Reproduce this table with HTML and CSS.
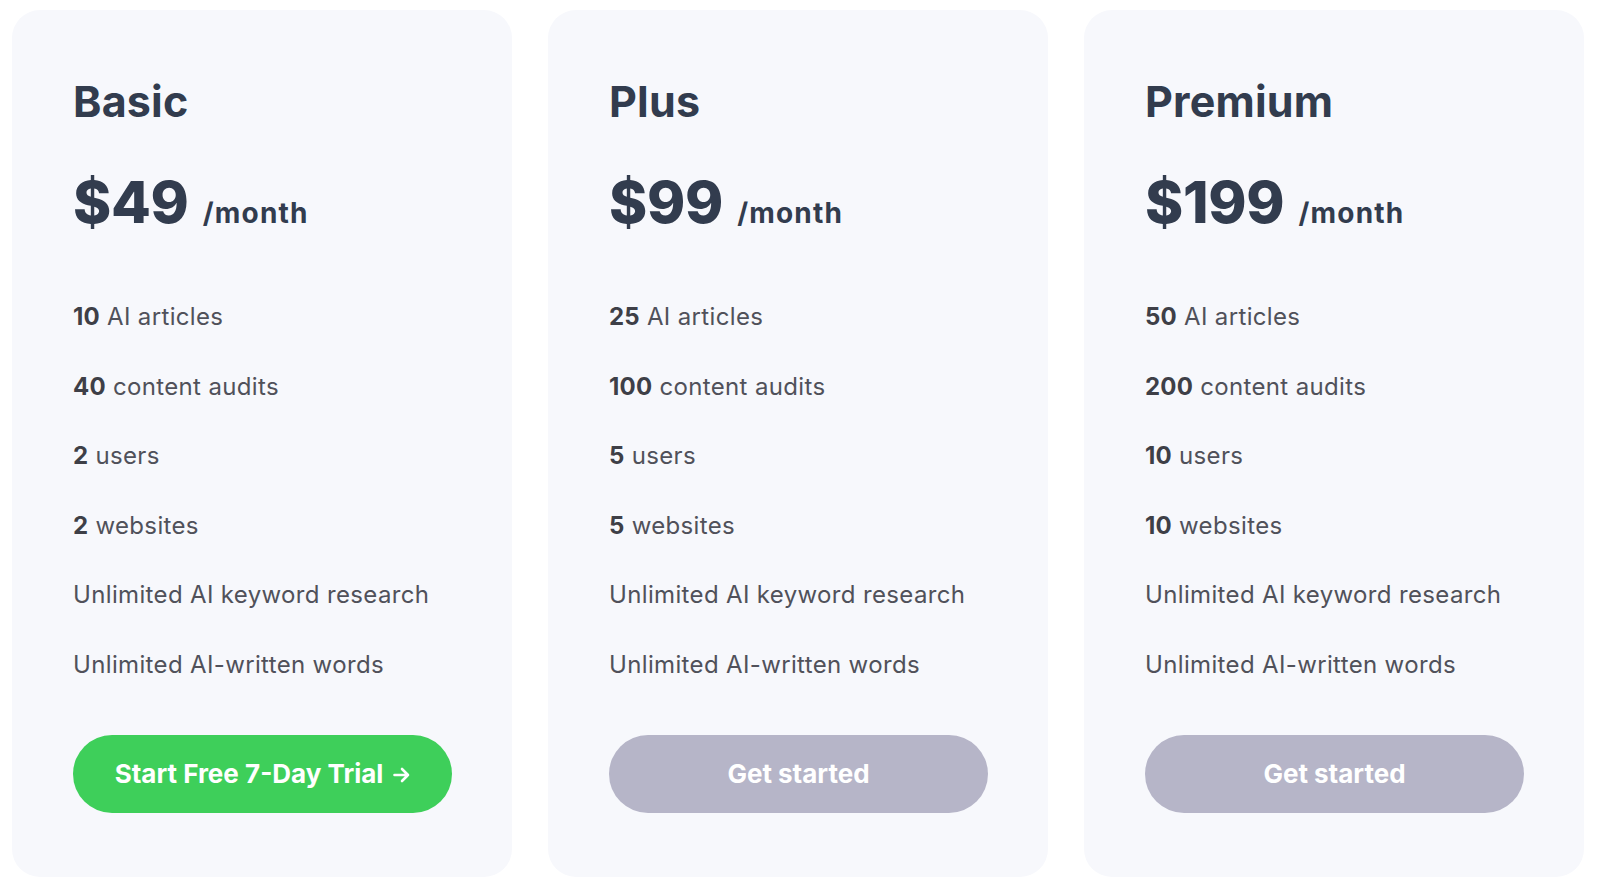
FILE: index.html
```html
<!DOCTYPE html>
<html lang="en">
<head>
<meta charset="utf-8">
<title>Pricing</title>
<link rel="stylesheet" href="styles.css">
</head>
<body>
<main class="plans">
  <section class="card">
    <h2 class="plan-name">Basic</h2>
    <div class="price"><span class="amount">$49</span><span class="period">/month</span></div>
    <ul class="features">
      <li><b>10</b> AI articles</li>
      <li><b>40</b> content audits</li>
      <li><b>2</b> users</li>
      <li><b>2</b> websites</li>
      <li>Unlimited AI keyword research</li>
      <li>Unlimited AI-written words</li>
    </ul>
    <a class="btn btn-green" href="#">Start Free 7-Day Trial
      <svg class="arrow" width="17" height="16" viewBox="0 0 17 16" aria-hidden="true"><path d="M1.5 8H15M9 2l6 6-6 6" fill="none" stroke="#fff" stroke-width="2.6" stroke-linecap="round" stroke-linejoin="round"/></svg>
    </a>
  </section>
  <section class="card">
    <h2 class="plan-name">Plus</h2>
    <div class="price"><span class="amount">$99</span><span class="period">/month</span></div>
    <ul class="features">
      <li><b>25</b> AI articles</li>
      <li><b>100</b> content audits</li>
      <li><b>5</b> users</li>
      <li><b>5</b> websites</li>
      <li>Unlimited AI keyword research</li>
      <li>Unlimited AI-written words</li>
    </ul>
    <a class="btn btn-gray" href="#">Get started</a>
  </section>
  <section class="card">
    <h2 class="plan-name">Premium</h2>
    <div class="price"><span class="amount">$199</span><span class="period">/month</span></div>
    <ul class="features">
      <li><b>50</b> AI articles</li>
      <li><b>200</b> content audits</li>
      <li><b>10</b> users</li>
      <li><b>10</b> websites</li>
      <li>Unlimited AI keyword research</li>
      <li>Unlimited AI-written words</li>
    </ul>
    <a class="btn btn-gray" href="#">Get started</a>
  </section>
</main>
</body>
</html>
```
FILE: styles.css
```css
* { box-sizing: border-box; }
html, body { margin: 0; padding: 0; background: #ffffff; }
body { font-family: Inter, "Noto Sans", sans-serif; }

.plans {
  display: grid;
  grid-template-columns: repeat(3, 500px);
  column-gap: 36px;
  padding: 10px 16px 0 12px;
  height: 877px;
}

.card {
  background: #f7f8fc;
  border-radius: 28px;
  padding: 63px 61px 0 61px;
  display: flex;
  flex-direction: column;
  align-items: flex-start;
}

.plan-name {
  margin: 0;
  font-size: 43px;
  line-height: 56px;
  font-weight: 700;
  color: #323c4e;
  letter-spacing: 0.2px;
}

.price {
  margin-top: 37px;
  display: flex;
  align-items: baseline;
  color: #323c4e;
  font-weight: 700;
}
.amount { font-size: 58px; line-height: 72px; font-weight: 800; letter-spacing: -0.3px; }
.period { font-size: 28px; margin-left: 14px; letter-spacing: 1.2px; }

.features {
  list-style: none;
  margin: 64px 0 0 0;
  padding: 0;
  display: flex;
  flex-direction: column;
  gap: 39.6px;
}
.features li {
  font-size: 24px;
  line-height: 30px;
  color: #50515a;
  letter-spacing: 0.35px;
}
.features b { font-weight: 700; color: #3e3f47; letter-spacing: 0.2px; }

.btn {
  margin-top: 55px;
  width: 379px;
  height: 78px;
  border-radius: 39px;
  display: flex;
  align-items: center;
  justify-content: center;
  gap: 10px;
  color: #ffffff;
  font-size: 26px;
  font-weight: 700;
  text-decoration: none;
}
.btn-green { background: #3ecf5a; }
.btn-gray { background: #b6b5c8; }
.arrow { display: block; margin-top: 2px; }
```
